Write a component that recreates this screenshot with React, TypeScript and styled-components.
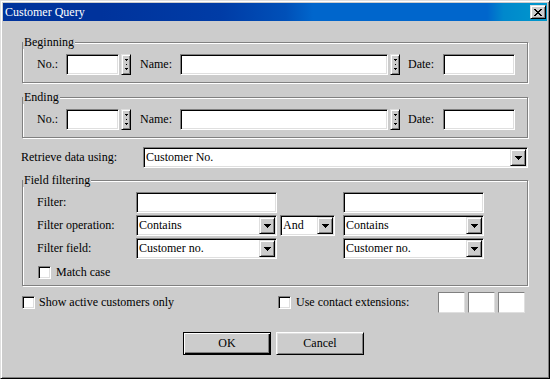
import React from "react";
import styled, { createGlobalStyle, css } from "styled-components";

const FACE = "#cccccc";

const Global = createGlobalStyle`
  html, body { margin: 0; padding: 0; background: ${FACE}; }
  body {
    font-family: "Liberation Serif", "Times New Roman", serif;
    font-size: 12px;
    color: #000;
  }
  * { box-sizing: border-box; }
`;

const raised = css`
  background: ${FACE};
  border: 1px solid;
  border-color: #dfdfdf #000 #000 #dfdfdf;
  box-shadow: inset 1px 1px 0 #fff, inset -1px -1px 0 #808080;
`;

const sunken = css`
  background: #fff;
  border: 1px solid;
  border-color: #808080 #fff #fff #808080;
  box-shadow: inset 1px 1px 0 #000, inset -1px -1px 0 #dfdfdf;
`;

const Window = styled.div`
  width: 550px;
  height: 379px;
  background: ${FACE};
  border: 1px solid;
  border-color: #dfdfdf #000 #000 #dfdfdf;
  box-shadow: inset 1px 1px 0 #fff, inset -1px -1px 0 #808080;
  padding: 2px;
  display: flex;
  flex-direction: column;
`;

const TitleBar = styled.div`
  height: 18px;
  display: flex;
  align-items: center;
  padding: 0 1px 0 2px;
  color: #fff;
  background: linear-gradient(
    to right,
    #00339c 0%,
    #00339c 18%,
    #003ca6 40%,
    #0050b8 52%,
    #0066cc 57%,
    #0066cc 89%,
    #0088cc 92%,
    #0099cc 100%
  );
`;

const TitleText = styled.span`
  font-size: 12px;
  line-height: 14px;
  white-space: nowrap;
`;

const CloseButton = styled.div`
  ${raised};
  margin-left: auto;
  width: 16px;
  height: 14px;
  display: flex;
  align-items: center;
  justify-content: center;
`;

const Content = styled.div`
  padding-left: 19px;
  display: flex;
  flex-direction: column;
  align-items: flex-start;
`;

const Group = styled.div<{ $top: number; $h: number }>`
  position: relative;
  margin-top: ${(p) => p.$top}px;
  width: 506px;
  height: ${(p) => p.$h}px;
  border: 1px solid #808080;
  box-shadow: 1px 1px 0 #fff, inset 1px 1px 0 #fff;
  padding: 11px 0 0 14px;
`;

const Legend = styled.span`
  position: absolute;
  top: -8px;
  left: 0px;
  padding: 0 1px;
  background: ${FACE};
  line-height: 14px;
  white-space: nowrap;
`;

const Row = styled.div<{ $top?: number; $left?: number }>`
  display: flex;
  align-items: center;
  height: 21px;
  margin-top: ${(p) => p.$top ?? 0}px;
  margin-left: ${(p) => p.$left ?? 0}px;
`;

const Label = styled.span<{ $w?: number; $ml?: number }>`
  ${(p) => (p.$w ? `width: ${p.$w}px;` : "")}
  margin-left: ${(p) => p.$ml ?? 0}px;
  flex: none;
  white-space: nowrap;
`;

const Field = styled.div<{ $w: number }>`
  ${sunken};
  width: ${(p) => p.$w}px;
  height: 21px;
  flex: none;
`;

const Spinner = styled.div`
  ${raised};
  width: 10px;
  height: 21px;
  margin-left: 2px;
  flex: none;
  display: flex;
  align-items: center;
  justify-content: center;
`;

const ComboBox = styled.div<{ $w: number }>`
  ${sunken};
  width: ${(p) => p.$w}px;
  height: 21px;
  flex: none;
  display: flex;
  align-items: center;
  padding: 1px 1px 1px 2px;
`;

const ComboText = styled.span`
  flex: 1;
  white-space: nowrap;
  overflow: hidden;
`;

const DropButton = styled.div`
  ${raised};
  width: 16px;
  height: 17px;
  flex: none;
  display: flex;
  align-items: center;
  justify-content: center;
`;

const FilterGrid = styled.div`
  display: grid;
  grid-template-columns: 99px 144px 63px 141px;
  grid-auto-rows: 21px;
  row-gap: 2px;
  align-items: center;
`;

const CheckRow = styled.div<{ $top: number; $left: number; $h: number }>`
  display: flex;
  align-items: center;
  margin-top: ${(p) => p.$top}px;
  margin-left: ${(p) => p.$left}px;
  height: ${(p) => p.$h}px;
`;

const CheckBox = styled.div`
  ${sunken};
  width: 13px;
  height: 13px;
  flex: none;
`;

const CheckLabel = styled.span<{ $ml: number }>`
  margin-left: ${(p) => p.$ml}px;
  white-space: nowrap;
`;

const OptionsRow = styled.div`
  margin-top: 6px;
  width: 503px;
  height: 21px;
  display: flex;
  align-items: center;
`;

const OptionItem = styled.div<{ $w?: number }>`
  display: flex;
  align-items: center;
  ${(p) => (p.$w ? `width: ${p.$w}px;` : "")}
  flex: none;
`;

const ExtBoxes = styled.div`
  margin-left: auto;
  display: flex;
  gap: 3px;
`;

const ExtBox = styled.div`
  width: 27px;
  height: 21px;
  background: #fff;
  border: 1px solid;
  border-color: #808080 #dfdfdf #dfdfdf #808080;
`;

const ButtonRow = styled.div`
  margin-top: 19px;
  margin-left: 161px;
  display: flex;
  gap: 5px;
`;

const PushButton = styled.div<{ $default?: boolean }>`
  width: 88px;
  height: 23px;
  background: ${FACE};
  display: flex;
  align-items: center;
  justify-content: center;
  border: 1px solid;
  ${(p) =>
    p.$default
      ? css`
          border-color: #000;
          box-shadow: inset 1px 1px 0 #fff, inset -1px -1px 0 #000,
            inset -2px -2px 0 #808080;
        `
      : css`
          border-color: #fff #000 #000 #fff;
          box-shadow: inset 1px 1px 0 #dfdfdf, inset -1px -1px 0 #808080;
        `}
`;

const SpinGlyph = () => (
  <svg width="5" height="11" viewBox="0 0 5 11" shapeRendering="crispEdges">
    <rect x="1" y="0" width="3" height="1" fill="#000" />
    <rect x="2" y="1" width="1" height="1" fill="#000" />
    <rect x="2" y="5" width="1" height="1" fill="#000" />
    <rect x="1" y="9" width="3" height="1" fill="#000" />
    <rect x="2" y="10" width="1" height="1" fill="#000" />
  </svg>
);

const Arrow = () => (
  <svg width="7" height="4" viewBox="0 0 7 4" shapeRendering="crispEdges">
    <rect x="0" y="0" width="7" height="1" fill="#000" />
    <rect x="1" y="1" width="5" height="1" fill="#000" />
    <rect x="2" y="2" width="3" height="1" fill="#000" />
    <rect x="3" y="3" width="1" height="1" fill="#000" />
  </svg>
);

const CloseGlyph = () => (
  <svg width="8" height="7" viewBox="0 0 8 7" shapeRendering="crispEdges">
    {[0, 1, 2, 3, 4, 5, 6].map((i) => (
      <React.Fragment key={i}>
        <rect x={i} y={i} width="2" height="1" fill="#000" />
        <rect x={6 - i} y={i} width="2" height="1" fill="#000" />
      </React.Fragment>
    ))}
  </svg>
);

const Combo = ({ w, text }: { w: number; text: string }) => (
  <ComboBox $w={w}>
    <ComboText>{text}</ComboText>
    <DropButton>
      <Arrow />
    </DropButton>
  </ComboBox>
);

const RangeRow = () => (
  <Row>
    <Label $w={29}>No.:</Label>
    <Field $w={53} />
    <Spinner>
      <SpinGlyph />
    </Spinner>
    <Label $w={40} $ml={9}>
      Name:
    </Label>
    <Field $w={208} />
    <Spinner>
      <SpinGlyph />
    </Spinner>
    <Label $w={35} $ml={8}>
      Date:
    </Label>
    <Field $w={72} />
  </Row>
);

export default function App() {
  return (
    <>
      <Global />
      <Window>
        <TitleBar>
          <TitleText>Customer Query</TitleText>
          <CloseButton>
            <CloseGlyph />
          </CloseButton>
        </TitleBar>
        <Content>
          <Group $top={21} $h={41}>
            <Legend>Beginning</Legend>
            <RangeRow />
          </Group>
          <Group $top={14} $h={41}>
            <Legend>Ending</Legend>
            <RangeRow />
          </Group>
          <Row $top={9} $left={-1}>
            <Label $w={122}>Retrieve data using:</Label>
            <Combo w={385} text="Customer No." />
          </Row>
          <Group $top={12} $h={106}>
            <Legend>Field filtering</Legend>
            <FilterGrid>
              <Label>Filter:</Label>
              <Field $w={141} />
              <span />
              <Field $w={141} />
              <Label>Filter operation:</Label>
              <Combo w={141} text="Contains" />
              <Combo w={55} text="And" />
              <Combo w={141} text="Contains" />
              <Label>Filter field:</Label>
              <Combo w={141} text="Customer no." />
              <span />
              <Combo w={141} text="Customer no." />
            </FilterGrid>
            <CheckRow $top={6} $left={1} $h={14}>
              <CheckBox />
              <CheckLabel $ml={5}>Match case</CheckLabel>
            </CheckRow>
          </Group>
          <OptionsRow>
            <OptionItem $w={256}>
              <CheckBox />
              <CheckLabel $ml={4}>Show active customers only</CheckLabel>
            </OptionItem>
            <OptionItem>
              <CheckBox />
              <CheckLabel $ml={5}>Use contact extensions:</CheckLabel>
            </OptionItem>
            <ExtBoxes>
              <ExtBox />
              <ExtBox />
              <ExtBox />
            </ExtBoxes>
          </OptionsRow>
          <ButtonRow>
            <PushButton $default>OK</PushButton>
            <PushButton>Cancel</PushButton>
          </ButtonRow>
        </Content>
      </Window>
    </>
  );
}
